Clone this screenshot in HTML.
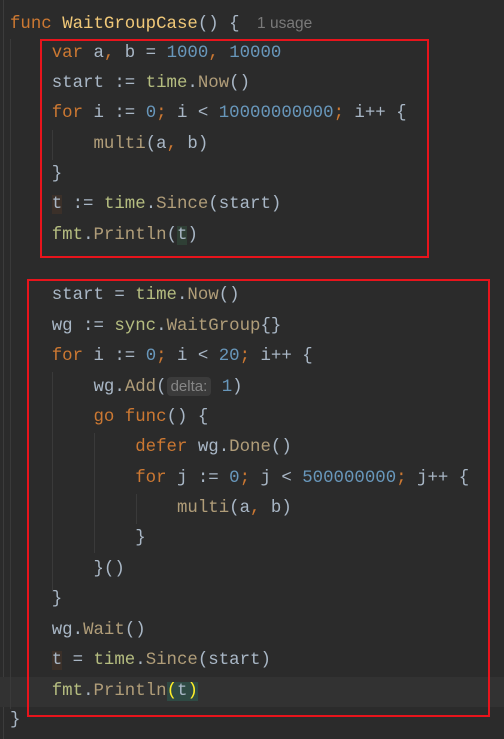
<!DOCTYPE html>
<html><head><style>
body{margin:0;width:504px;height:739px;background:#2b2b2b;overflow:hidden;position:relative;font-family:"Liberation Mono",monospace;font-size:17.4px;color:#a9b7c6}
.l{position:absolute;left:10px;height:30px;line-height:30px;white-space:pre;transform:translateY(2px)}
.k{color:#cc7832}.n{color:#6897bb}.f{color:#f0c878}.p{color:#b5bd80}.m{color:#b09d79}.c{color:#cc7832}
.box{position:absolute;border:2px solid #e8141c}
.g{position:absolute;width:1px;background:#3a3a3a}
.hint{background:#3b3b3b;color:#868686;font-family:"Liberation Sans",sans-serif;font-size:15px;border-radius:4px;padding:1px 4px}
</style></head><body>
<div style="position:absolute;left:3px;top:0;width:1px;height:739px;background:#3c3c3c"></div>
<div style="position:absolute;left:0;top:677px;width:504px;height:30px;background:#323232"></div>
<div class="g" style="left:10px;top:39px;height:670px"></div>
<div class="g" style="left:52px;top:130px;height:30px"></div>
<div class="g" style="left:52px;top:372px;height:220px"></div>
<div class="g" style="left:94px;top:433px;height:120px"></div>
<div class="g" style="left:136px;top:494px;height:30px"></div>

<div class="l" style="top:7px"><span class="k">func</span> <span class="f">WaitGroupCase</span>() { <span style="font-family:'Liberation Sans',sans-serif;color:#7a7a7a;font-size:15.5px;padding-left:7px">1 usage</span></div>
<div class="l" style="top:37px">    <span class="k">var</span> a<span class="c">,</span> b = <span class="n">1000</span><span class="c">,</span> <span class="n">10000</span></div>
<div class="l" style="top:67px">    start := <span class="p">time</span>.<span class="m">Now</span>()</div>
<div class="l" style="top:97px">    <span class="k">for</span> i := <span class="n">0</span><span class="c">;</span> i &lt; <span class="n">10000000000</span><span class="c">;</span> i++ {</div>
<div class="l" style="top:128px">        <span class="m">multi</span>(a<span class="c">,</span> b)</div>
<div class="l" style="top:158px">    }</div>
<div class="l" style="top:188px">    <span style="background:#3b3029">t</span> := <span class="p">time</span>.<span class="m">Since</span>(start)</div>
<div class="l" style="top:219px">    <span class="p">fmt</span>.<span class="m">Println</span>(<span style="background:#2f3f35">t</span>)</div>
<div class="l" style="top:279px">    start = <span class="p">time</span>.<span class="m">Now</span>()</div>
<div class="l" style="top:310px">    wg := <span class="p">sync</span>.<span class="m">WaitGroup</span>{}</div>
<div class="l" style="top:340px">    <span class="k">for</span> i := <span class="n">0</span><span class="c">;</span> i &lt; <span class="n">20</span><span class="c">;</span> i++ {</div>
<div class="l" style="top:370px">        wg.<span class="m">Add</span>(<span class="hint">delta:</span> <span class="n">1</span>)</div>
<div class="l" style="top:401px">        <span class="k">go func</span>() {</div>
<div class="l" style="top:431px">            <span class="k">defer</span> wg.<span class="m">Done</span>()</div>
<div class="l" style="top:462px">            <span class="k">for</span> j := <span class="n">0</span><span class="c">;</span> j &lt; <span class="n">500000000</span><span class="c">;</span> j++ {</div>
<div class="l" style="top:492px">                <span class="m">multi</span>(a<span class="c">,</span> b)</div>
<div class="l" style="top:522px">            }</div>
<div class="l" style="top:553px">        }()</div>
<div class="l" style="top:583px">    }</div>
<div class="l" style="top:614px">    wg.<span class="m">Wait</span>()</div>
<div class="l" style="top:644px">    <span style="background:#3b3029">t</span> = <span class="p">time</span>.<span class="m">Since</span>(start)</div>
<div class="l" style="top:675px">    <span class="p">fmt</span>.<span class="m">Println</span><span style="background:#2f4a44;color:#ffef28">(</span><span style="background:#2f4a44">t</span><span style="background:#2f4a44;color:#ffef28">)</span></div>
<div class="l" style="top:704px">}</div>

<div class="box" style="left:40px;top:39px;width:385px;height:215px"></div>
<div class="box" style="left:27px;top:279px;width:459px;height:434px"></div>
</body></html>
